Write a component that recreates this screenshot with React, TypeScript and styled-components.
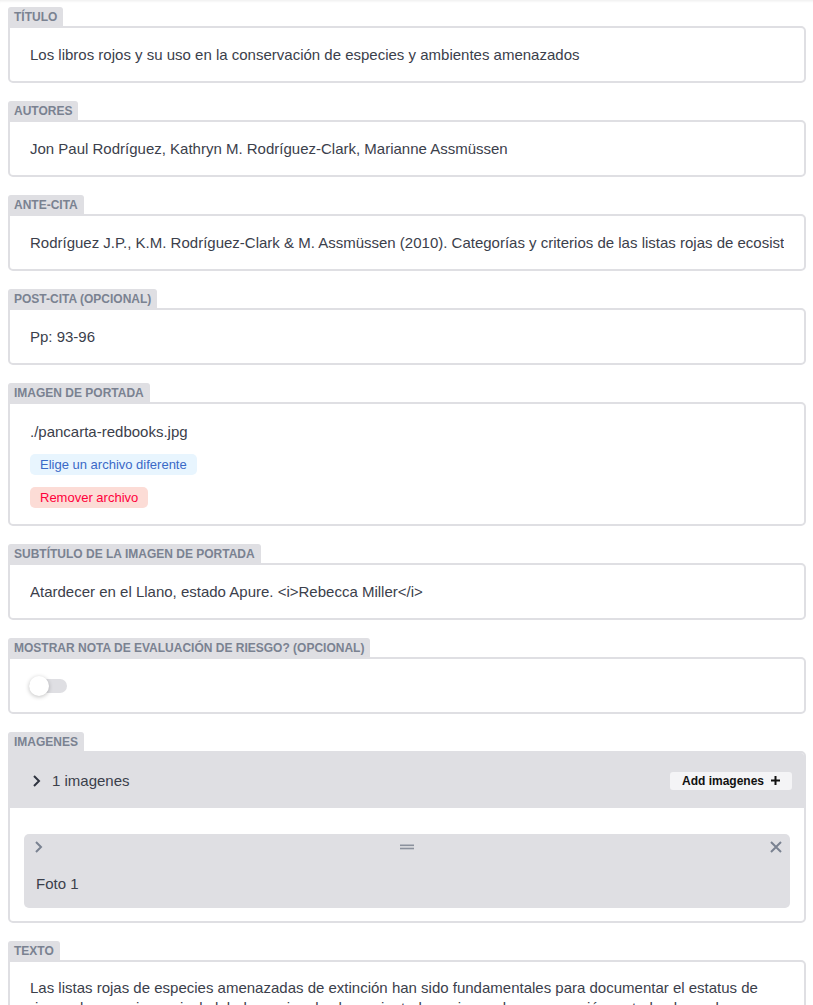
import React from "react";
import styled, { createGlobalStyle } from "styled-components";

const Global = createGlobalStyle`
  html, body { margin: 0; padding: 0; background: #fff; }
  body { font-family: "Liberation Sans", Arial, Helvetica, sans-serif; overflow: hidden; }
  * { box-sizing: border-box; }
`;

const Page = styled.div`
  width: 813px;
  height: 1005px;
  overflow: hidden;
  padding: 7px 7px 0 8px;
  box-shadow: inset 0 3px 3px -2px rgba(0, 0, 0, 0.08);
  display: flex;
  flex-direction: column;
  gap: 18px;
`;

const Field = styled.div`
  display: flex;
  flex-direction: column;
  align-items: flex-start;
`;

const Label = styled.label`
  display: inline-block;
  background: #dfdfe3;
  color: #7a8291;
  font-size: 12px;
  line-height: 14px;
  font-weight: 700;
  text-transform: uppercase;
  padding: 3px 6px 2px;
  border-radius: 3px 3px 0 0;
`;

const Box = styled.div`
  width: 100%;
  border: 2px solid #dfdfe3;
  border-radius: 0 5px 5px 5px;
  background: #fff;
  overflow: hidden;
`;

const TextValue = styled.div`
  padding: 17px 20px 16px 20px;
  height: 53px;
`;

const Clip = styled.div`
  font-size: 15px;
  line-height: 20px;
  color: #3b404b;
  white-space: nowrap;
  overflow: hidden;
`;

const FileBody = styled.div`
  padding: 18px 20px 16px;
  display: flex;
  flex-direction: column;
  align-items: flex-start;
  gap: 12px;
`;

const FileName = styled.div`
  font-size: 15px;
  line-height: 20px;
  color: #3b404b;
`;

const FileButton = styled.button<{ $tone: "blue" | "red" }>`
  border: 0;
  font-family: inherit;
  font-size: 13px;
  line-height: 21px;
  height: 21px;
  padding: 0 10px;
  border-radius: 5px;
  background: ${(p) => (p.$tone === "blue" ? "#e8f5fe" : "#fcdcd6")};
  color: ${(p) => (p.$tone === "blue" ? "#3a69c7" : "#ff003b")};
`;

const ToggleBody = styled.div`
  height: 53px;
  padding: 0 19px;
  display: flex;
  align-items: center;
`;

const Track = styled.div`
  position: relative;
  width: 38px;
  height: 14px;
  border-radius: 7px;
  background: #dfdfe3;
`;

const Knob = styled.div`
  position: absolute;
  left: 0;
  top: -3px;
  width: 20px;
  height: 20px;
  border-radius: 50%;
  background: #fff;
  box-shadow: 0 1px 4px rgba(0, 0, 0, 0.25);
`;

const ListHeader = styled.div`
  background: #dfdfe3;
  height: 55px;
  display: flex;
  align-items: center;
  padding: 0 12px 0 21px;
  gap: 11px;
  font-size: 15px;
  color: #3b404b;
`;

const HeaderTitle = styled.span`
  flex: 1;
`;

const AddButton = styled.button`
  display: flex;
  align-items: center;
  gap: 7px;
  border: 0;
  background: #f4f4f6;
  border-radius: 3px;
  height: 18px;
  padding: 0 12px;
  font-family: inherit;
  font-size: 12px;
  font-weight: 700;
  color: #111;
`;

const ListBody = styled.div`
  padding: 26px 14px 13px;
`;

const Item = styled.div`
  background: #dfdfe3;
  border-radius: 5px;
`;

const ItemTop = styled.div`
  height: 26px;
  display: flex;
  align-items: center;
  justify-content: space-between;
  padding: 0 8px 0 9px;
`;

const ItemLabel = styled.div`
  padding: 14px 12px 14px 12px;
  font-size: 15px;
  line-height: 20px;
  color: #3b404b;
`;

const TextArea = styled.div`
  padding: 16px 20px;
  font-size: 15px;
  line-height: 20px;
  color: #3b404b;
`;

const Chevron = ({ color }: { color: string }) => (
  <svg width="10" height="14" viewBox="0 0 10 14">
    <path d="M3 2 L8 7 L3 12" fill="none" stroke={color} strokeWidth="2" />
  </svg>
);

const DragHandle = () => (
  <svg width="14" height="6" viewBox="0 0 14 6">
    <rect x="0" y="0.5" width="14" height="1.6" fill="#8b919d" />
    <rect x="0" y="3.7" width="14" height="1.6" fill="#8b919d" />
  </svg>
);

const Cross = () => (
  <svg width="12" height="12" viewBox="0 0 12 12">
    <path d="M1 1 L11 11 M11 1 L1 11" stroke="#7a8291" strokeWidth="2" />
  </svg>
);

const Plus = () => (
  <svg width="9" height="9" viewBox="0 0 9 9">
    <path d="M4.5 0 V9 M0 4.5 H9" stroke="#111" strokeWidth="2" />
  </svg>
);

const TextField = ({ label, value }: { label: string; value: string }) => (
  <Field>
    <Label>{label}</Label>
    <Box>
      <TextValue>
        <Clip>{value}</Clip>
      </TextValue>
    </Box>
  </Field>
);

export default function App() {
  return (
    <>
      <Global />
      <Page>
        <TextField
          label="Título"
          value="Los libros rojos y su uso en la conservación de especies y ambientes amenazados"
        />
        <TextField
          label="Autores"
          value="Jon Paul Rodríguez, Kathryn M. Rodríguez-Clark, Marianne Assmüssen"
        />
        <TextField
          label="Ante-cita"
          value="Rodríguez J.P., K.M. Rodríguez-Clark & M. Assmüssen (2010). Categorías y criterios de las listas rojas de ecosistemas"
        />
        <TextField label="Post-cita (opcional)" value="Pp: 93-96" />
        <Field>
          <Label>Imagen de portada</Label>
          <Box>
            <FileBody>
              <FileName>./pancarta-redbooks.jpg</FileName>
              <FileButton $tone="blue">Elige un archivo diferente</FileButton>
              <FileButton $tone="red">Remover archivo</FileButton>
            </FileBody>
          </Box>
        </Field>
        <TextField
          label="Subtítulo de la imagen de portada"
          value="Atardecer en el Llano, estado Apure. <i>Rebecca Miller</i>"
        />
        <Field>
          <Label>Mostrar nota de evaluación de riesgo? (opcional)</Label>
          <Box>
            <ToggleBody>
              <Track>
                <Knob />
              </Track>
            </ToggleBody>
          </Box>
        </Field>
        <Field>
          <Label>Imagenes</Label>
          <Box>
            <ListHeader>
              <Chevron color="#2f3440" />
              <HeaderTitle>1 imagenes</HeaderTitle>
              <AddButton>
                Add imagenes <Plus />
              </AddButton>
            </ListHeader>
            <ListBody>
              <Item>
                <ItemTop>
                  <Chevron color="#7a8291" />
                  <DragHandle />
                  <Cross />
                </ItemTop>
                <ItemLabel>Foto 1</ItemLabel>
              </Item>
            </ListBody>
          </Box>
        </Field>
        <Field>
          <Label>Texto</Label>
          <Box>
            <TextArea>
              Las listas rojas de especies amenazadas de extinción han sido fundamentales para documentar el estatus de
              riesgo de especies a nivel global y nacional, y han orientado acciones de conservación en todo el mundo.
            </TextArea>
          </Box>
        </Field>
      </Page>
    </>
  );
}
